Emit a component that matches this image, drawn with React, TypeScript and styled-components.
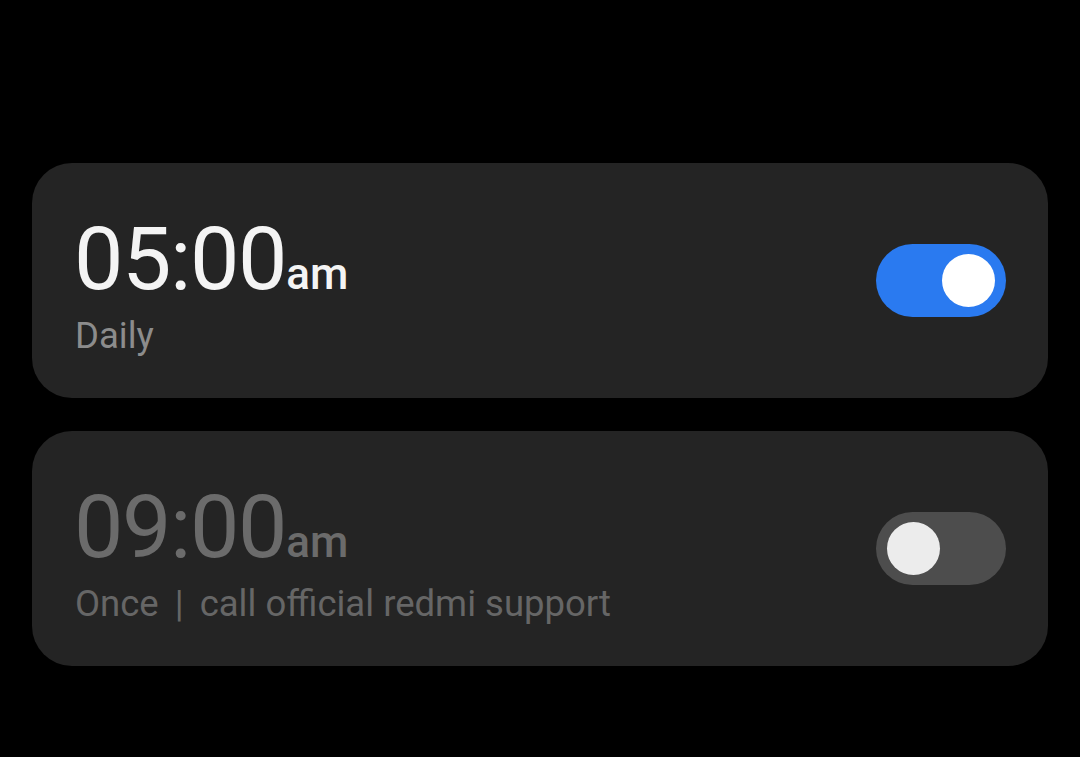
import React, { useState } from "react";
import styled, { createGlobalStyle } from "styled-components";

const GlobalStyle = createGlobalStyle`
  html, body {
    margin: 0;
    padding: 0;
    background: #000;
  }
  body {
    font-family: Roboto, "Noto Sans", sans-serif;
    -webkit-font-smoothing: antialiased;
  }
`;

const Screen = styled.div`
  width: 1080px;
  height: 757px;
  background: #000;
  box-sizing: border-box;
  padding: 163px 32px 0;
  display: flex;
  flex-direction: column;
  gap: 33px;
`;

const Card = styled.div`
  height: 235px;
  border-radius: 40px;
  background: #242424;
  box-sizing: border-box;
  padding: 0 42px 0 44px;
  display: flex;
  align-items: center;
  justify-content: space-between;
`;

const Info = styled.div<{ $on: boolean }>`
  display: flex;
  flex-direction: column;
  padding-top: 10px;
  color: ${({ $on }) => ($on ? "#f4f4f4" : "#6b6b6b")};
`;

const Time = styled.div`
  display: flex;
  align-items: baseline;
  margin-left: -2px;
  font-size: 88px;
  font-weight: 400;
  line-height: 88px;
  letter-spacing: -1.4px;
`;

const Meridiem = styled.span`
  font-size: 44px;
  font-weight: 500;
  letter-spacing: 0;
`;

const Subtitle = styled.div<{ $on: boolean }>`
  margin-top: -2px;
  margin-left: -1px;
  font-size: 36.5px;
  line-height: 40px;
  color: ${({ $on }) => ($on ? "#8c8c8c" : "#666666")};
`;

const Divider = styled.span`
  margin: 0 16px;
`;

const Track = styled.button<{ $on: boolean }>`
  width: 130px;
  height: 73px;
  border: none;
  border-radius: 37px;
  padding: 0 11px;
  cursor: pointer;
  display: flex;
  align-items: center;
  justify-content: ${({ $on }) => ($on ? "flex-end" : "flex-start")};
  background: ${({ $on }) => ($on ? "#2a7af0" : "#4d4d4d")};
`;

const Knob = styled.span<{ $on: boolean }>`
  width: 53px;
  height: 53px;
  border-radius: 50%;
  background: ${({ $on }) => ($on ? "#ffffff" : "#ececec")};
`;

interface Alarm {
  id: number;
  time: string;
  meridiem: string;
  repeat: string;
  label?: string;
  on: boolean;
}

const initialAlarms: Alarm[] = [
  { id: 1, time: "05:00", meridiem: "am", repeat: "Daily", on: true },
  {
    id: 2,
    time: "09:00",
    meridiem: "am",
    repeat: "Once",
    label: "call official redmi support",
    on: false,
  },
];

const App = () => {
  const [alarms, setAlarms] = useState(initialAlarms);

  const toggle = (id: number) => {
    setAlarms((list) =>
      list.map((a) => (a.id === id ? { ...a, on: !a.on } : a))
    );
  };

  return (
    <>
      <GlobalStyle />
      <Screen>
        {alarms.map((alarm) => (
          <Card key={alarm.id}>
            <Info $on={alarm.on}>
              <Time>
                {alarm.time}
                <Meridiem>{alarm.meridiem}</Meridiem>
              </Time>
              <Subtitle $on={alarm.on}>
                {alarm.repeat}
                {alarm.label && (
                  <>
                    <Divider>|</Divider>
                    {alarm.label}
                  </>
                )}
              </Subtitle>
            </Info>
            <Track $on={alarm.on} onClick={() => toggle(alarm.id)}>
              <Knob $on={alarm.on} />
            </Track>
          </Card>
        ))}
      </Screen>
    </>
  );
};

export default App;
